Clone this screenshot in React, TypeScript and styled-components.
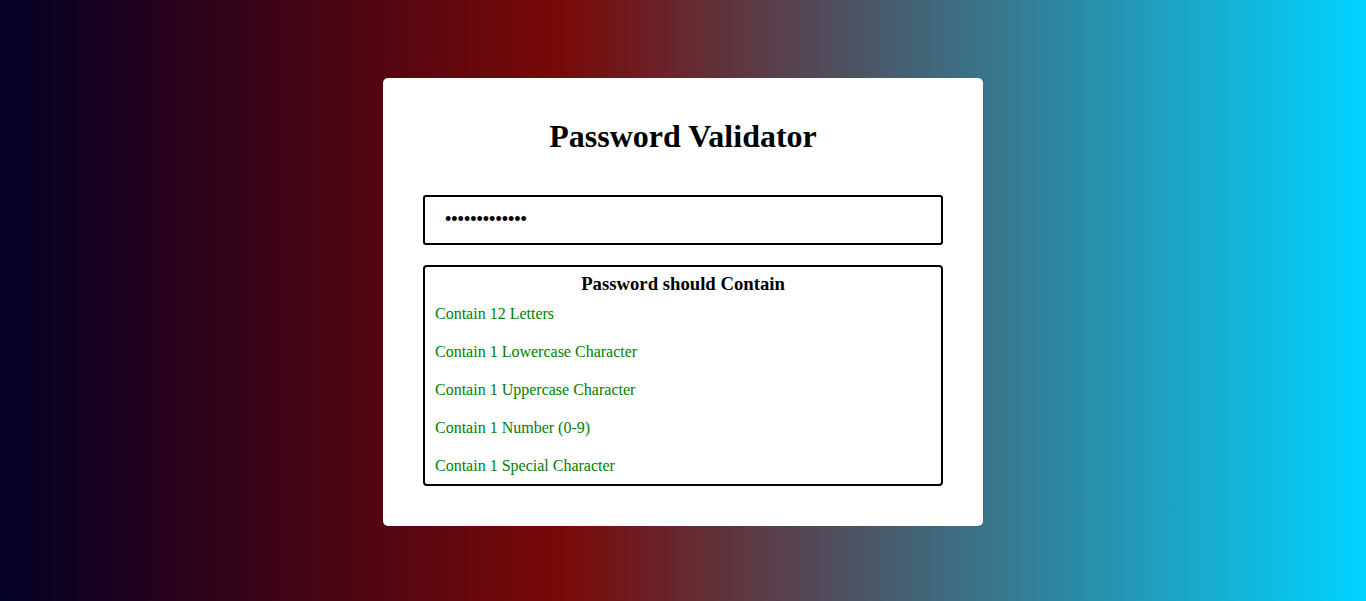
import React, { useState } from "react";
import styled, { createGlobalStyle } from "styled-components";

const Global = createGlobalStyle`
  html, body { margin: 0; padding: 0; }
  body {
    font-family: "Liberation Serif", "Times New Roman", serif;
  }
`;

const Page = styled.div`
  width: 100%;
  height: 601px;
  display: flex;
  align-items: center;
  justify-content: center;
  background: linear-gradient(90deg, rgb(2, 0, 36) 0%, rgb(121, 9, 9) 41%, rgb(0, 212, 255) 100%);
`;

const Card = styled.div`
  width: 600px;
  box-sizing: border-box;
  padding: 40px;
  background: #fff;
  border-radius: 5px;
  margin-top: 2px;
  display: flex;
  flex-direction: column;
`;

const Title = styled.h1`
  margin: 0 0 40px;
  font-size: 32px;
  line-height: 37px;
  font-weight: bold;
  text-align: center;
  color: #000;
`;

const Input = styled.input`
  height: 50px;
  box-sizing: border-box;
  width: 100%;
  border: 2px solid #000;
  border-radius: 3px;
  padding: 0 20px;
  font-family: "Liberation Sans", Arial, sans-serif;
  font-size: 18px;
  outline: none;
  margin-bottom: 20px;
`;

const RuleBox = styled.div`
  border: 2px solid #000;
  border-radius: 4px;
  display: flex;
  flex-direction: column;
  padding-bottom: 0;
`;

const RuleHeading = styled.h3`
  margin: 6px 0 0;
  font-size: 18.72px;
  line-height: 22px;
  font-weight: bold;
  text-align: center;
`;

const Rule = styled.div<{ $ok: boolean }>`
  padding: 10px 10px;
  font-size: 16px;
  line-height: 18px;
  color: ${(p) => (p.$ok ? "green" : "red")};

  &:last-child {
    padding-bottom: 9px;
  }
`;

export default function App() {
  const [pw, setPw] = useState("Password@1234");
  const rules = [
    { label: "Contain 12 Letters", ok: pw.length >= 12 },
    { label: "Contain 1 Lowercase Character", ok: /[a-z]/.test(pw) },
    { label: "Contain 1 Uppercase Character", ok: /[A-Z]/.test(pw) },
    { label: "Contain 1 Number (0-9)", ok: /[0-9]/.test(pw) },
    { label: "Contain 1 Special Character", ok: /[^A-Za-z0-9]/.test(pw) },
  ];
  return (
    <>
      <Global />
      <Page>
        <Card>
          <Title>Password Validator</Title>
          <Input type="password" value={pw} onChange={(e) => setPw(e.target.value)} />
          <RuleBox>
            <RuleHeading>Password should Contain</RuleHeading>
            {rules.map((r) => (
              <Rule key={r.label} $ok={r.ok}>
                {r.label}
              </Rule>
            ))}
          </RuleBox>
        </Card>
      </Page>
    </>
  );
}
